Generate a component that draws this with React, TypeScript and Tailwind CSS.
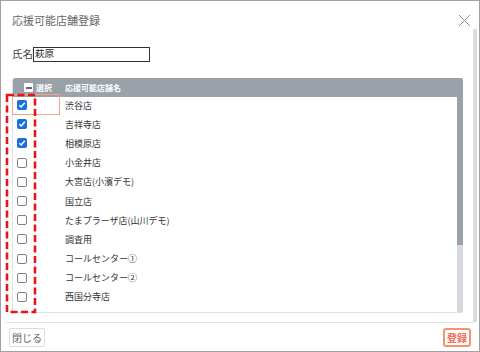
import React from "react";

const stores = [
  { name: "渋谷店", checked: true },
  { name: "吉祥寺店", checked: true },
  { name: "相模原店", checked: true },
  { name: "小金井店", checked: false },
  { name: "大宮店(小濱デモ)", checked: false },
  { name: "国立店", checked: false },
  { name: "たまプラーザ店(山川デモ)", checked: false },
  { name: "調査用", checked: false },
  { name: "コールセンター①", checked: false },
  { name: "コールセンター②", checked: false },
  { name: "西国分寺店", checked: false },
];

function Box({ checked }: { checked: boolean }) {
  if (checked) {
    return (
      <div className="w-[10px] h-[10px] rounded-[2px] bg-[#1a6fe0] flex items-center justify-center">
        <svg width="8" height="8" viewBox="0 0 8 8">
          <path d="M1.3 4.2 L3.2 6 L6.8 1.8" stroke="white" strokeWidth="1.5" fill="none" />
        </svg>
      </div>
    );
  }
  return <div className="w-[10px] h-[10px] rounded-[2px] border border-[#808080] bg-white" />;
}

export default function App() {
  return (
    <div
      className="relative w-[480px] h-[352px] bg-white border border-[#a0a0a0] flex flex-col overflow-hidden"
      style={{ fontFamily: '"Noto Sans CJK JP", "Noto Sans", sans-serif' }}
    >
      {/* header */}
      <div className="h-[27px] flex items-end justify-between pl-[11px] pr-[8px]">
        <div className="text-[11px] text-[#666] leading-none mb-[2px]">応援可能店舗登録</div>
        <svg width="13" height="13" viewBox="0 0 13 13" className="mb-[1px]">
          <path d="M1 1 L12 12 M12 1 L1 12" stroke="#8a8a8a" strokeWidth="1" />
        </svg>
      </div>
      {/* body */}
      <div className="flex flex-1 min-h-0">
        <div className="flex-1 flex flex-col pl-[11px] pr-[10px]">
          <div className="mt-[18px] flex items-center h-[16px]">
            <span className="text-[10.5px] text-[#444] leading-none">氏名</span>
            <div className="ml-[0px] w-[117px] h-[15px] border border-[#333] flex items-center pl-[1px] text-[9.5px] text-[#222] leading-none">
              萩原
            </div>
          </div>
          {/* table */}
          <div className="mt-[16px] flex h-[235px]">
            <div className="flex-1 flex flex-col border-l border-b border-[#e0e0e0] rounded-tl-[3px] overflow-hidden">
              <div className="h-[19px] shrink-0 bg-[#9aa1a8] flex items-center text-white text-[8px] font-bold leading-none">
                <div className="ml-[11px] w-[9px] h-[9px] bg-white rounded-[1px] flex items-center justify-center">
                  <div className="w-[6px] h-[2px] bg-[#666]" />
                </div>
                <span className="ml-[3px] w-[29px]">選択</span>
                <span>応援可能店舗名</span>
              </div>
              {stores.map((s) => (
                <div key={s.name} className="h-[19.2px] pb-[3px] flex items-center shrink-0">
                  <div className="ml-[4px] w-[48px]">
                    <Box checked={s.checked} />
                  </div>
                  <span className="text-[9px] text-[#333] leading-none">{s.name}</span>
                </div>
              ))}
            </div>
            <div className="w-[6px] flex flex-col rounded-b-[2px] overflow-hidden">
              <div className="h-[167px] bg-[#9aa1a8] rounded-tr-[2px]" />
              <div className="flex-1 bg-[#d6d9dd]" />
            </div>
          </div>
        </div>
        <div className="w-[4px] mt-[1px] mr-[2px] bg-[#d9dbdf]" />
      </div>
      {/* footer */}
      <div className="h-[29px] mx-[5px] border-t border-[#e2e2e2] flex items-center justify-between px-[3px] pt-[1px]">
        <button className="h-[19px] px-[2px] border border-[#dcdcdc] rounded-[2px] bg-white text-[10px] text-[#666] leading-none">
          閉じる
        </button>
        <button className="h-[19px] px-[2px] border-2 border-[#f7926a] rounded-[3px] bg-white text-[10px] font-bold text-[#ef6a5a] leading-none">
          登録
        </button>
      </div>
      {/* overlays */}
      <div className="absolute left-[11px] top-[93px] w-[48px] h-[21px] border border-[#f4a48a]" />
      <svg className="absolute left-[4px] top-[92px]" width="32" height="221" viewBox="0 0 32 221">
        <rect x="2" y="2" width="28" height="217" fill="none" stroke="#e8141c" strokeWidth="2.6" strokeDasharray="7 3.5" />
      </svg>
    </div>
  );
}
